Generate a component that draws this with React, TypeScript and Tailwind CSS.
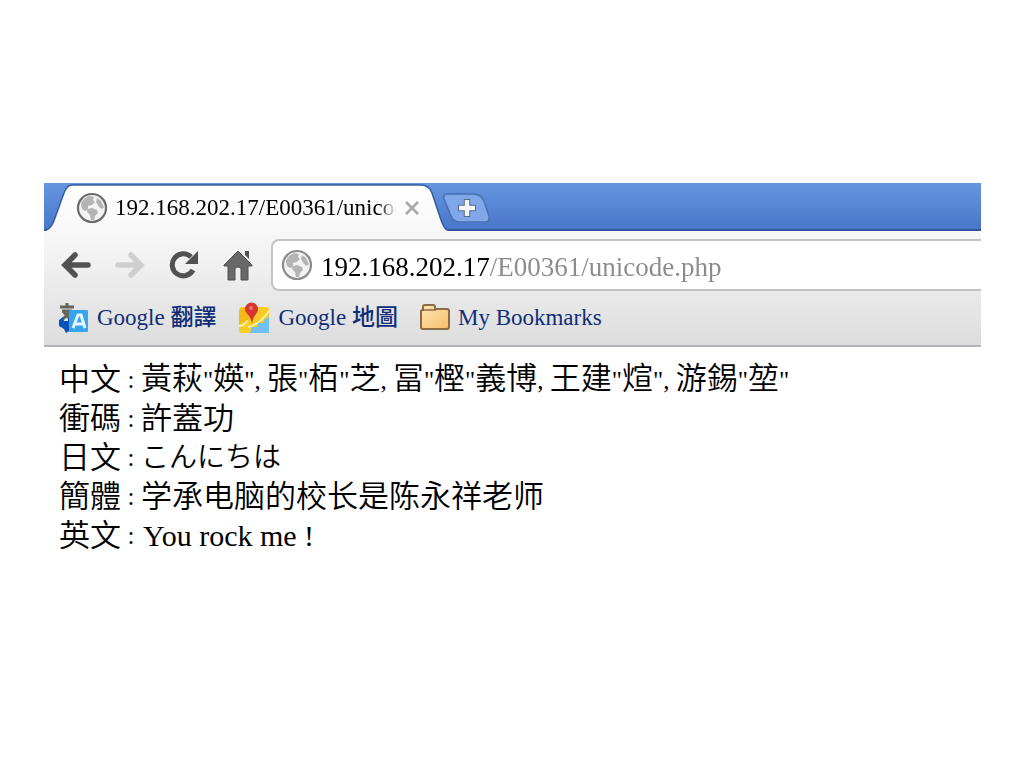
import type { ReactNode } from 'react'

const latin = "font-['Liberation_Serif','Noto_Sans_CJK_TC',serif]"

const GlobeSvg = ({ className }: { className?: string }) => (
  <svg viewBox="0 0 32 32" className={className} aria-hidden="true">
    <circle cx="16" cy="16" r="14" fill="#f3f3f3" stroke="currentColor" strokeWidth="2.2" />
    <path
      d="M5 13c0-4 4-8 9-9l4 1-1 3 2 2-3 3-4 1 0 4-3 1-3-2zM12 17l4-1 5 2 1 3-3 3-1 4-3 0-1-5-3-3zM21 6l4 3 3 6-2 2-3-2-3-5z"
      fill="#b4b4b4"
    />
  </svg>
)

const BackSvg = ({ className }: { className?: string }) => (
  <svg viewBox="0 0 30 28" className={className} aria-hidden="true">
    <path
      d="M14 4L4 14l10 10M5 14h22"
      fill="none"
      stroke="currentColor"
      strokeWidth="5.5"
      strokeLinecap="round"
    />
  </svg>
)

const ReloadSvg = () => (
  <svg viewBox="0 0 30 30" className="h-[30px] w-[30px]" aria-hidden="true">
    <path d="M24 20A11 11 0 1 1 22 7" fill="none" stroke="currentColor" strokeWidth="5" />
    <path d="M29 1v13H16z" fill="currentColor" />
  </svg>
)

const HomeSvg = () => (
  <svg viewBox="0 0 30 32" className="h-8 w-[30px]" aria-hidden="true">
    <path d="M15 2L1 16v1h4v14h7V20q0-2 3-2t3 2v11h7V17h4v-1z" fill="#686868" stroke="#515151" />
    <path d="M22 2h4v8l-4-4z" fill="#515151" />
  </svg>
)

const TranslateSvg = () => (
  <svg viewBox="0 0 32 32" className="h-8 w-8" aria-hidden="true">
    <path d="M2 1h17v17H2z" fill="#e8e6dc" />
    <path d="M3 5h14M10 1v4M5 9h10M14 9l-8 8M6 9l6 7" fill="none" stroke="#62625e" strokeWidth="3" />
    <path d="M2 18l4-3 1 4 4 0 0-4 3 5v8l-5 3-2-4-5-3z" fill="#0753ba" />
    <rect x="12" y="8" width="19" height="22" rx="1" fill="#36a5ee" />
    <path d="M16 26l5-13h3l4 13M18 22h8" fill="none" stroke="#e7f5ff" strokeWidth="3" />
  </svg>
)

const MapsSvg = () => (
  <svg viewBox="0 0 32 32" className="h-8 w-8" aria-hidden="true">
    <rect x="1" y="5" width="30" height="26" rx="3" fill="#f9cb24" />
    <path d="M1 24q10 0 9-17M10 25q11-2 21-16" fill="none" stroke="#fff0a0" strokeWidth="2" />
    <path d="M31 15v16H12l2-6 5 0 1-4 5 0 2-4z" fill="#70c0f4" />
    <path d="M1 9l6-4 5 12-11 5z" fill="#f4b81b" />
    <path d="M7 7a6 6 0 0 1 13 0c0 5-5 6-6 15C13 13 7 12 7 7z" fill="#d8352c" />
    <circle cx="13" cy="6" r="2" fill="#ed7568" />
  </svg>
)

const FolderSvg = () => (
  <svg viewBox="0 0 30 28" className="h-7 w-[30px]" aria-hidden="true">
    <defs>
      <linearGradient id="folder" x1="0" y1="0" x2="1" y2="1">
        <stop offset="0" stopColor="#ffe7b5" />
        <stop offset="1" stopColor="#f7bd68" />
      </linearGradient>
    </defs>
    <path
      d="M2 6h1V3q0-2 2-2h8q2 0 2 2v2h12q2 0 2 2v16q0 2-2 2H3q-2 0-2-2V7z"
      fill="url(#folder)"
      stroke="#8c6a42"
      strokeWidth="2"
    />
    <path d="M3 6h13" stroke="#8c6a42" strokeWidth="1.5" />
  </svg>
)

const TabShapeSvg = () => (
  <svg
    viewBox="0 0 404 48"
    preserveAspectRatio="none"
    className="absolute inset-0 h-full w-full"
    aria-hidden="true"
  >
    <defs>
      <linearGradient id="tab" x1="0" y1="0" x2="0" y2="1">
        <stop offset="0" stopColor="#ffffff" />
        <stop offset="1" stopColor="#f8f8f8" />
      </linearGradient>
    </defs>
    <path
      d="M0 48C7 46 9 41 12 32L20 10Q23 2 28 2H377Q385 2 388 10L396 34Q400 48 404 48z"
      fill="url(#tab)"
    />
    <path
      d="M0 48C7 46 9 41 12 32L20 10Q23 2 28 2H377Q385 2 388 10L396 34Q400 47 404 47"
      fill="none"
      stroke="#335f9f"
      strokeWidth="1.5"
    />
  </svg>
)

const Bookmark = ({ icon, children }: { icon: ReactNode; children: ReactNode }) => (
  <li>
    <a
      href="#"
      className="flex items-center gap-2 text-[23px] leading-7 font-medium whitespace-nowrap text-[#102d78]"
    >
      {icon}
      <span>{children}</span>
    </a>
  </li>
)

const lines = [
  { label: '中文', text: '黃萩"媖", 張"栢"芝, 冨"樫"義博, 王建"煊", 游錫"堃"', lang: 'zh-TW' },
  { label: '衝碼', text: '許蓋功', lang: 'zh-TW' },
  { label: '日文', text: 'こんにちは', lang: 'ja', className: 'text-[28px]' },
  { label: '簡體', text: '学承电脑的校长是陈永祥老师', lang: 'zh-CN' },
  { label: '英文', text: 'You rock me !', lang: 'en', className: 'pl-0.5 text-[30px]' },
]

// Punctuation between the CJK glyphs is set smaller than the glyphs themselves
const MixedText = ({ text }: { text: string }) => (
  <>
    {text.split(/(", |"|, )/).map((part, i) =>
      i % 2 ? (
        <span key={i} className="text-[25px] whitespace-pre">
          {part}
        </span>
      ) : (
        part
      ),
    )}
  </>
)

const App = () => {
  return (
    <div className={`min-h-screen bg-white pt-[183px] pr-[43px] pl-11 text-black ${latin}`}>
      <header>
        <div className="flex h-12 items-center border-b-2 border-[#2f559d] bg-linear-to-b from-[#6596df] to-[#4a77ca]">
          <div className="relative -mb-[2px] flex h-12 w-[404px] shrink-0 items-center pt-[2px] pr-6 pl-8">
            <TabShapeSvg />
            <GlobeSvg className="relative h-8 w-8 shrink-0 text-[#6c6c6c]" />
            <span className="relative ml-[7px] min-w-0 flex-1 overflow-hidden mask-r-from-94% mask-r-to-100% text-[23px] leading-7 whitespace-nowrap">
              192.168.202.17/E00361/unicode.php
            </span>
            <button type="button" aria-label="Close tab" className="relative ml-1 p-1">
              <svg viewBox="0 0 16 16" className="h-4 w-4" aria-hidden="true">
                <path d="M2 2l12 12M14 2L2 14" stroke="#a9a9a9" strokeWidth="2.6" />
              </svg>
            </button>
          </div>
          <button type="button" aria-label="New tab" className="relative -ml-[5px] pt-1">
            <svg viewBox="0 0 48 30" className="h-[30px] w-12" aria-hidden="true">
              <path
                d="M4 1h26q8 0 11 7l5 15q1 6-4 6H17q-7 0-9-6L1 6q-1-5 3-5z"
                fill="#80a8e8"
                stroke="#486fb2"
                strokeWidth="1.5"
              />
              <path d="M24 6v18M15 15h18" stroke="#50698f" strokeWidth="6.5" />
              <path d="M24 7v16M16 15h16" stroke="#f4f4f4" strokeWidth="4.5" />
            </svg>
          </button>
        </div>

        <div className="border-b-2 border-[#b1b5b9] bg-linear-to-b from-[#f8f8f8] to-[#dddddd]">
          <div className="flex items-center pt-2">
            <nav className="flex w-[227px] shrink-0 items-center gap-6 pl-[17px] text-[#515151]">
              <button type="button" aria-label="Back">
                <BackSvg className="h-7 w-[30px]" />
              </button>
              <button type="button" aria-label="Forward" className="text-[#cfcfcf]">
                <BackSvg className="h-7 w-[30px] rotate-180" />
              </button>
              <button type="button" aria-label="Reload">
                <ReloadSvg />
              </button>
              <button type="button" aria-label="Home">
                <HomeSvg />
              </button>
            </nav>
            <label className="flex h-[52px] min-w-0 flex-1 items-center gap-2 rounded-l-lg border-2 border-r-0 border-[#c3c3c3] bg-white pl-2">
              <GlobeSvg className="h-8 w-8 shrink-0 text-[#8c8c8c]" />
              <input
                type="text"
                aria-label="Address"
                defaultValue="192.168.202.17/E00361/unicode.php"
                className="h-12 w-full min-w-0 bg-linear-to-r from-black from-[169px] to-[#8b8b8b] to-[169px] bg-clip-text pt-1 text-[27px] text-transparent caret-black outline-none"
              />
            </label>
          </div>
          <ul className="flex h-[54px] items-center gap-[22px] pl-[13px]">
            <Bookmark icon={<TranslateSvg />}>Google 翻譯</Bookmark>
            <Bookmark icon={<MapsSvg />}>Google 地圖</Bookmark>
            <Bookmark icon={<FolderSvg />}>My Bookmarks</Bookmark>
          </ul>
        </div>
      </header>

      <main className="pt-[13px] pl-[15px] text-[31px] font-[350]">
        {lines.map(({ label, text, lang, className }) => (
          <p key={label} className="flex h-[39px] items-center leading-[39px] whitespace-nowrap">
            <span>{label}</span>
            <span className="w-5 text-center text-[25px]">:</span>
            <span lang={lang} className={className}>
              <MixedText text={text} />
            </span>
          </p>
        ))}
      </main>
    </div>
  )
}

export default App
